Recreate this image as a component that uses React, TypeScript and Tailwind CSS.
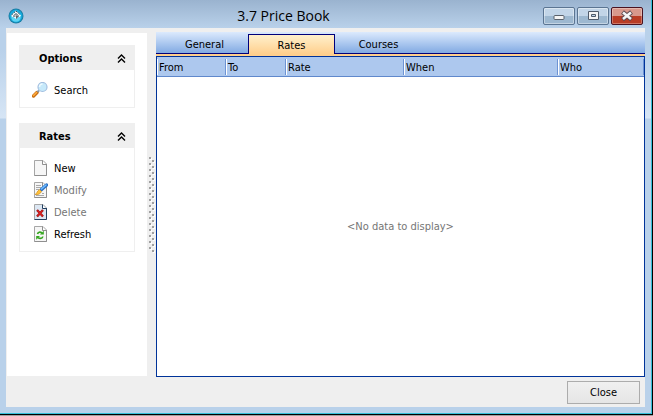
import { useState } from 'react'
import type { ReactNode } from 'react'

interface Task {
  label: string
  icon: ReactNode
  disabled?: boolean
}

interface TaskGroupProps {
  title: string
  tasks: Task[]
}

const TABS = ['General', 'Rates', 'Courses']

const COLUMNS = [
  { name: 'From', width: 'w-[69px]' },
  { name: 'To', width: 'w-[60px]' },
  { name: 'Rate', width: 'w-[118px]' },
  { name: 'When', width: 'w-[154px]' },
  { name: 'Who', width: 'w-auto' },
]

function AppLogo() {
  return (
    <svg width="16" height="16" viewBox="0 0 16 16" aria-hidden="true">
      <circle cx="8" cy="8" r="7.5" fill="#1b7da3" />
      <circle cx="8" cy="8" r="6.5" fill="#14a9dc" />
      <circle cx="8" cy="9" r="4.8" fill="#5fd4f2" />
      <path d="M3 7.5 8 2.5 13 7.5 11.5 9H10.5L8 11 5.5 9H4.5Z" fill="#f4fbff" />
      <path d="M3.5 7 8 3 12.5 7" fill="none" stroke="#3a4a55" strokeWidth="1" strokeDasharray="2 1" />
      <path d="M6 9V7.5L8 5.5 10 7.5V9M7.5 8H9V10H8" fill="none" stroke="#26343d" strokeWidth="1" />
    </svg>
  )
}

function SearchIcon() {
  return (
    <svg width="16" height="16" viewBox="0 0 16 16" aria-hidden="true">
      <path d="M1.5 14 5 10.5" stroke="#c96f12" strokeWidth="3.4" strokeLinecap="round" />
      <path d="M1.5 13.5 4.5 10.5" stroke="#ffab3d" strokeWidth="1.6" strokeLinecap="round" />
      <path d="M5.5 10 7 8.5" stroke="#8597a8" strokeWidth="2" />
      <circle cx="10.5" cy="5" r="4.5" fill="#c6e9fa" stroke="#a3bfe0" strokeWidth="1.2" />
      <path d="M7.5 5a3 3 0 0 1 3-3" fill="none" stroke="#eefaff" strokeWidth="1.4" />
    </svg>
  )
}

// Sheet of paper with a folded corner, shared by the record icons
function PageIcon({ stroke = '#8f8f8f', fill = '#f6f6f6', children }: { stroke?: string; fill?: string; children?: ReactNode }) {
  return (
    <svg width="16" height="16" viewBox="0 0 16 16" aria-hidden="true">
      <path d="M2.5.5H11L14.5 4V15.5H2.5Z" fill={fill} stroke="#a6a6a6" />
      <path d="M14.5 4V15.5H2.5M10.5.5V4.5H14.5" fill="none" stroke={stroke} />
      <path d="M11 1.5 13.5 4H11Z" fill="#fff" />
      {children}
    </svg>
  )
}

function ModifyIcon() {
  return (
    <PageIcon>
      <path d="M4 3.5H9M4 5.5H9M4 7.5H7M4 13.5H12M10 11.5H12" stroke="#a9a9a9" />
      <path d="M9.5 7.5 14.5 3" stroke="#2a6fc4" strokeWidth="3.4" strokeLinecap="round" />
      <path d="M9.5 7 14 3" stroke="#6fbcff" strokeWidth="1.6" strokeLinecap="round" />
      <path d="M3 12.5C5 12 4.5 9.5 7.5 7.5L9.5 9.5C8.5 12 6 13 3 12.5Z" fill="#ffc23a" stroke="#d08f24" strokeWidth=".7" />
    </PageIcon>
  )
}

function DeleteIcon() {
  return (
    <PageIcon stroke="#24405f" fill="#dce7f3">
      <path d="M5 6 11 12.5M11 6 5 12.5" stroke="#9c1414" strokeWidth="2.4" />
      <path d="M5.5 6.5 10.5 12M10.5 6.5 5.5 12" stroke="#d92222" strokeWidth="1.2" />
    </PageIcon>
  )
}

function RefreshIcon() {
  return (
    <PageIcon>
      <path d="M5.5 8C6 6 8 5.5 10 7" fill="none" stroke="#35a51f" strokeWidth="1.6" />
      <path d="M11.8 4.8V8.6H8Z" fill="#35a51f" />
      <path d="M10.800 10.5C10.5 12.5 8 13 6 11.6" fill="none" stroke="#35a51f" strokeWidth="1.6" />
      <path d="M4.200 13.800V10H8Z" fill="#35a51f" />
    </PageIcon>
  )
}

const OPTION_TASKS: Task[] = [{ label: 'Search', icon: <SearchIcon /> }]

const RATE_TASKS: Task[] = [
  { label: 'New', icon: <PageIcon /> },
  { label: 'Modify', icon: <ModifyIcon />, disabled: true },
  { label: 'Delete', icon: <DeleteIcon />, disabled: true },
  { label: 'Refresh', icon: <RefreshIcon /> },
]

function TaskGroup({ title, tasks }: TaskGroupProps) {
  const [open, setOpen] = useState(true)

  return (
    <section className="border border-[#efefef]">
      <h2>
        <button
          onClick={() => setOpen(!open)}
          aria-expanded={open}
          className="flex h-6 w-full items-center justify-between bg-[#efefef] pr-2 pl-[19px] font-bold"
        >
          <span className="pt-0.5">{title}</span>
          <svg width="9" height="9" viewBox="0 0 9 9" aria-hidden="true" className={open ? '' : 'rotate-180'}>
            <path d="M1 4.5 4.5 1 8 4.5M1 8.5 4.5 5 8 8.5" fill="none" stroke="#000" strokeWidth="1.4" />
          </svg>
        </button>
      </h2>
      {open && (
        <ul className="pt-[9px] pb-1.5">
          {tasks.map((task) => (
            <li key={task.label}>
              <button disabled={task.disabled} className="flex h-[22px] items-center gap-1.5 pl-3 disabled:text-[#757575]">
                {task.icon}
                <span className="pt-0.5">{task.label}</span>
              </button>
            </li>
          ))}
        </ul>
      )}
    </section>
  )
}

function TitleBar() {
  return (
    <header className="flex h-7 items-start px-2">
      <div className="flex h-full items-center pt-1">
        <AppLogo />
      </div>
      <h1 className="flex-1 pt-1.5 text-center font-['Open_Sans',sans-serif] text-[14px] leading-5">3.7 Price Book</h1>
      <div className="flex gap-0.5 pt-[7px]">
        <button aria-label="Minimize" className="flex h-[18px] w-8 items-center justify-center rounded-xs border border-[#5b7592] bg-linear-to-b from-[#c2d5e8] from-50% to-[#9db8d0] to-50% inset-ring inset-ring-white/40">
          <svg width="12" height="12" viewBox="0 0 12 12">
            <rect x="1" y="5.5" width="10" height="4" rx="1" fill="#f5f5f5" stroke="#5a616b" />
          </svg>
        </button>
        <button aria-label="Maximize" className="flex h-[18px] w-8 items-center justify-center rounded-xs border border-[#5b7592] bg-linear-to-b from-[#c2d5e8] from-50% to-[#9db8d0] to-50% inset-ring inset-ring-white/40">
          <svg width="12" height="12" viewBox="0 0 12 12">
            <path d="M1.5 1.5H11.5V9.5H1.5ZM4.5 4.5V6.5H8.5V4.5Z" fillRule="evenodd" fill="#f5f5f5" stroke="#4f5a69" />
          </svg>
        </button>
        <button aria-label="Close window" className="flex h-[18px] w-8 items-center justify-center rounded-xs border border-[#4a1220] bg-linear-to-b from-[#d8988c] from-50% to-[#b93c25] to-50% inset-ring inset-ring-white/30">
          <svg width="12" height="12" viewBox="0 0 12 12">
            <path d="M1.5 2 10.5 9.5M10.5 2 1.5 9.5" stroke="#5c4a50" strokeWidth="4.4" />
            <path d="M2 2.5 10 9M10 2.5 2 9" stroke="#f5f5f5" strokeWidth="2.6" />
          </svg>
        </button>
      </div>
    </header>
  )
}

function Splitter() {
  return (
    <div className="flex w-[9px] items-center pl-0.5" role="separator">
      <svg width="6" height="96" viewBox="0 0 6 96" aria-hidden="true">
        <defs>
          <pattern id="grip" width="6" height="6" patternUnits="userSpaceOnUse">
            <path d="M1 1h2v2h-2zM4 4h2v2h-2z" fill="#fff" />
            <path d="M0 0h2v2h-2zM3 3h2v2h-2z" fill="#a0a0a0" />
          </pattern>
        </defs>
        <rect width="6" height="96" fill="url(#grip)" />
      </svg>
    </div>
  )
}

export default function App() {
  const [activeTab, setActiveTab] = useState('Rates')

  return (
    <div className="flex min-h-screen flex-col border-b border-[#a0a0a0] bg-black pr-px pb-px font-['DejaVu_Sans_Condensed','DejaVu_Sans',sans-serif] text-[11px] leading-4 text-black">
      <div className="flex flex-1 flex-col border-r border-b border-[#35bfd8] bg-[linear-gradient(#9ab3cf_0px,#b9d1ea_28px,#b9d1ea_50px,#d6e5f5_118px,#b9d1ea_119px)]">
        <TitleBar />
        <div className="mx-1.5 mb-1.5 flex flex-1 flex-col bg-[#efefef] pt-1 pl-px">
          <main className="flex flex-1">
            <aside className="my-px flex w-[140px] flex-col gap-[15px] bg-white p-3">
              <TaskGroup title="Options" tasks={OPTION_TASKS} />
              <TaskGroup title="Rates" tasks={RATE_TASKS} />
            </aside>
            <Splitter />
            <div className="flex flex-1 flex-col">
              <div role="tablist" className="flex h-[22px] items-end border-b border-[#00007b] bg-linear-to-b from-[#dceafd] to-[#82aae2] pl-[5px]">
                {TABS.map((tab) => (
                  <button
                    key={tab}
                    role="tab"
                    aria-selected={tab === activeTab}
                    onClick={() => setActiveTab(tab)}
                    className={
                      tab === activeTab
                        ? '-mb-px h-5 w-[87px] border border-b-0 border-[#00007b] bg-linear-to-b from-[#fff0cc] to-[#ffcf8c] pt-0.5'
                        : 'h-[18px] w-[87px] pt-0.5'
                    }
                  >
                    {tab}
                  </button>
                ))}
              </div>
              <div className="h-0.5 bg-[#ffcf8c]" />
              <div role="tabpanel" className="flex flex-1 flex-col border border-[#003399] bg-white">
                <table className="w-full table-fixed border-collapse">
                  <thead>
                    <tr className="border-b border-[#5f88cc] bg-[#adc8ee]">
                      {COLUMNS.map((column) => (
                        <th key={column.name} className={`${column.width} pt-0.5 pb-px text-left font-normal`}>
                          <div className="border-r border-[#6d93d3]">
                            <div className="border-l border-white pt-px pl-px leading-[15px]">{column.name}</div>
                          </div>
                        </th>
                      ))}
                    </tr>
                  </thead>
                </table>
                <p className="flex flex-1 items-center justify-center text-[#757575]">&lt;No data to display&gt;</p>
              </div>
            </div>
          </main>
          <footer className="flex justify-end px-[5px] pt-1 pb-[3px]">
            <button className="h-[23px] w-[73px] border border-[#acacac] bg-linear-to-b from-[#f0f0f0] to-[#e5e5e5]">Close</button>
          </footer>
        </div>
      </div>
    </div>
  )
}
